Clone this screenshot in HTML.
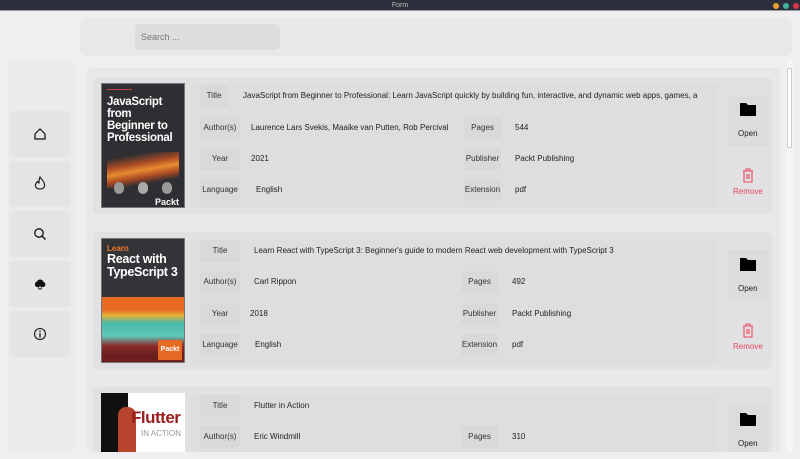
<!DOCTYPE html>
<html><head><meta charset="utf-8"><style>
*{margin:0;padding:0;box-sizing:border-box}
body{width:800px;height:459px;overflow:hidden;background:#efeef0;font-family:"Liberation Sans",sans-serif;font-size:8px;color:#222;position:relative}
.a{position:absolute}
.tb{left:0;top:0;width:800px;height:11px;background:#2c2e3b;color:#bbb;font-size:7px;text-align:center;line-height:11px;border-bottom:1px solid #999}
.dot{top:3px;width:6px;height:6px;border-radius:50%}
.sb{left:7px;top:60px;width:68px;height:392px;background:#ebeaec;border-radius:6px}
.nb{left:9px;width:62px;height:46px;background:#e4e3e6;border-radius:5px;display:flex;align-items:center;justify-content:center}
.card{left:93px;width:679px;height:137px;background:#e1e0e3;border-radius:6px}
.lbl{color:#333}
.row{background:#dddcdf;border-radius:3px}
.pill{background:#d9d8db;border-radius:3px;text-align:center;line-height:22px;height:22px}
.cv{font-family:"Liberation Sans",sans-serif;font-weight:bold}
</style></head><body>
<div class="a tb">Form</div>
<div class="a dot" style="left:773px;background:#e8a22d"></div>
<div class="a dot" style="left:783px;background:#3cb39a"></div>
<div class="a dot" style="left:793px;background:#e0344e"></div>

<div class="a" style="left:80px;top:18px;width:712px;height:38px;background:#e8e7ea;border-radius:6px"></div>
<div class="a" style="left:135px;top:24px;width:145px;height:26px;background:#dddcdf;border-radius:5px;color:#777;font-size:9px;line-height:26px;padding-left:6px">Search ...</div>

<div class="a sb"></div>
<div class="a nb" style="top:111px"><svg width="14" height="14" viewBox="0 0 14 14"><path d="M2 7 L7 2 L12 7 V12 H2 Z" fill="none" stroke="#111" stroke-width="1.2"/></svg></div>
<div class="a nb" style="top:161px"><svg width="14" height="16" viewBox="0 0 14 16"><path d="M7 1 C9 4 12 6 11.5 10 C11 14 3 14 2.5 10 C2.2 8 3.5 6.5 4.5 5.5 C5 7 6 7 6 7 C6 4.5 6 3 7 1Z" fill="none" stroke="#111" stroke-width="1.1"/></svg></div>
<div class="a nb" style="top:211px"><svg width="14" height="14" viewBox="0 0 14 14"><circle cx="6" cy="6" r="4.2" fill="none" stroke="#111" stroke-width="1.3"/><path d="M9 9 L12.5 12.5" stroke="#111" stroke-width="1.4"/></svg></div>
<div class="a nb" style="top:261px"><svg width="14" height="14" viewBox="0 0 14 14"><path d="M3.5 10 A3 3 0 0 1 4 4.5 A3.5 3.5 0 0 1 10.5 5 A2.6 2.6 0 0 1 10.5 10 Z" fill="#111"/><circle cx="7" cy="10.5" r="2" fill="#111"/><path d="M7 9 V12 M5.6 10.5 H8.4" stroke="#fff" stroke-width="0.8"/></svg></div>
<div class="a nb" style="top:311px"><svg width="14" height="14" viewBox="0 0 14 14"><circle cx="7" cy="7" r="5.5" fill="none" stroke="#111" stroke-width="1.1"/><path d="M7 6 V10.5" stroke="#111" stroke-width="1.3"/><circle cx="7" cy="4.2" r="0.8" fill="#111"/></svg></div>

<div class="a" style="left:86px;top:68px;width:694px;height:384px;background:#e8e7ea;border-radius:6px"></div>
<div class="a" style="left:786px;top:60px;width:7px;height:392px;background:#f5f5f6"></div>
<div class="a" style="left:787px;top:68px;width:5px;height:80px;background:#fff;border:1px solid #ccc"></div>

<!-- card 1 -->
<div class="a card" style="top:77px"></div>
<div class="a" style="left:101px;top:83px;width:84px;height:125px;background:#2f2f33;border:1px solid #777;color:#fff;padding:5px 5px">
<div style="height:1px;width:25px;background:#c44;margin-bottom:6px"></div>
<div class="cv" style="font-size:11.5px;line-height:12px;letter-spacing:-0.3px">JavaScript from Beginner to Professional</div>
<div style="height:36px;margin-top:8px;background:linear-gradient(170deg,transparent 15%,#a84a24 35%,#e88a30 50%,#a84a24 65%,transparent 80%)"></div>
<div style="display:flex;justify-content:space-around;margin-top:-6px"><span style="width:10px;height:12px;border-radius:5px;background:#999"></span><span style="width:10px;height:12px;border-radius:5px;background:#aaa"></span><span style="width:10px;height:12px;border-radius:5px;background:#999"></span></div>
<div class="cv" style="font-size:9px;text-align:right;margin-top:3px">Packt</div></div>
<div class="a row" style="left:191px;top:84px;width:527px;height:124px;background:#dedde0"></div>
<div class="a pill lbl" style="left:200px;top:85px;width:28px">Title</div>
<div class="a" style="left:243px;top:91px">JavaScript from Beginner to Professional: Learn JavaScript quickly by building fun, interactive, and dynamic web apps, games, a</div>
<div class="a pill lbl" style="left:200px;top:117px;width:40px">Author(s)</div>
<div class="a" style="left:251px;top:123px">Laurence Lars Svekis, Maaike van Putten, Rob Percival</div>
<div class="a pill lbl" style="left:200px;top:148px;width:40px">Year</div>
<div class="a" style="left:251px;top:154px">2021</div>
<div class="a pill lbl" style="left:200px;top:179px;width:40px">Language</div>
<div class="a" style="left:256px;top:185px">English</div>
<div class="a pill lbl" style="left:464px;top:117px;width:37px">Pages</div>
<div class="a" style="left:515px;top:123px">544</div>
<div class="a pill lbl" style="left:464px;top:148px;width:37px">Publisher</div>
<div class="a" style="left:515px;top:154px">Packt Publishing</div>
<div class="a pill lbl" style="left:464px;top:179px;width:37px">Extension</div>
<div class="a" style="left:515px;top:185px">pdf</div>
<div class="a" style="left:728px;top:96px;width:40px;height:50px;background:#dcdbde;border-radius:3px"></div>
<svg class="a" style="left:739px;top:101px" width="18" height="16" viewBox="0 0 18 16"><path d="M1 2 H7 L9 4 H17 V15 H1Z" fill="#000"/></svg>
<div class="a" style="left:738px;top:129px">Open</div>
<svg class="a" style="left:741px;top:168px" width="14" height="15" viewBox="0 0 14 15"><path d="M2 3 H12 M5 3 V1 H9 V3 M3 3 V14 H11 V3 M6 6 V11 M8 6 V11" fill="none" stroke="#e84a5f" stroke-width="1.1"/></svg>
<div class="a" style="left:733px;top:187px;color:#e84a5f">Remove</div>

<!-- card 2 -->
<div class="a card" style="top:232px"></div>
<div class="a" style="left:101px;top:238px;width:84px;height:125px;background:#333438;border:1px solid #777;color:#fff;padding:5px 5px">
<div class="cv" style="color:#f07a28;font-size:8px">Learn</div>
<div class="cv" style="font-size:12.5px;line-height:13px;letter-spacing:-0.3px">React with TypeScript 3</div></div>
<div class="a" style="left:102px;top:297px;width:82px;height:65px;background:linear-gradient(#e66a24 0%,#e66a24 20%,#e8b030 28%,#4ab8a8 40%,#5ec8b8 60%,#8a2a2a 75%,#6a1e1e 90%)"></div>
<div class="a" style="left:158px;top:340px;width:24px;height:20px;background:#e66a24;color:#fff;font-size:7px;font-weight:bold;text-align:center;line-height:20px">Packt</div>
<div class="a row" style="left:191px;top:239px;width:527px;height:124px;background:#dedde0"></div>
<div class="a pill lbl" style="left:200px;top:240px;width:40px">Title</div>
<div class="a" style="left:254px;top:246px">Learn React with TypeScript 3: Beginner's guide to modern React web development with TypeScript 3</div>
<div class="a pill lbl" style="left:200px;top:271px;width:40px">Author(s)</div>
<div class="a" style="left:254px;top:277px">Carl Rippon</div>
<div class="a pill lbl" style="left:200px;top:303px;width:40px">Year</div>
<div class="a" style="left:250px;top:309px">2018</div>
<div class="a pill lbl" style="left:200px;top:334px;width:40px">Language</div>
<div class="a" style="left:255px;top:340px">English</div>
<div class="a pill lbl" style="left:461px;top:271px;width:37px">Pages</div>
<div class="a" style="left:512px;top:277px">492</div>
<div class="a pill lbl" style="left:461px;top:303px;width:37px">Publisher</div>
<div class="a" style="left:512px;top:309px">Packt Publishing</div>
<div class="a pill lbl" style="left:461px;top:334px;width:37px">Extension</div>
<div class="a" style="left:512px;top:340px">pdf</div>
<div class="a" style="left:728px;top:250px;width:40px;height:50px;background:#dcdbde;border-radius:3px"></div>
<svg class="a" style="left:739px;top:256px" width="18" height="16" viewBox="0 0 18 16"><path d="M1 2 H7 L9 4 H17 V15 H1Z" fill="#000"/></svg>
<div class="a" style="left:738px;top:284px">Open</div>
<svg class="a" style="left:741px;top:323px" width="14" height="15" viewBox="0 0 14 15"><path d="M2 3 H12 M5 3 V1 H9 V3 M3 3 V14 H11 V3 M6 6 V11 M8 6 V11" fill="none" stroke="#e84a5f" stroke-width="1.1"/></svg>
<div class="a" style="left:733px;top:342px;color:#e84a5f">Remove</div>

<!-- card 3 -->
<div class="a card" style="top:387px;height:65px"></div>
<div class="a" style="left:101px;top:393px;width:84px;height:59px;background:#fff;overflow:hidden">
<div class="a" style="left:0;top:0;width:27px;height:59px;background:#111"></div>
<div class="a" style="left:17px;top:14px;width:18px;height:45px;background:#b8442e;border-radius:8px 8px 0 0"></div>
<div class="a cv" style="left:30px;top:15px;color:#9a1d1d;font-size:17px;letter-spacing:-0.5px;font-family:'Liberation Sans Narrow','Liberation Sans',sans-serif">Flutter</div>
<div class="a" style="left:40px;top:36px;color:#999;font-size:8px">IN ACTION</div></div>
<div class="a row" style="left:191px;top:394px;width:527px;height:58px;background:#dedde0"></div>
<div class="a pill lbl" style="left:200px;top:395px;width:40px">Title</div>
<div class="a" style="left:254px;top:401px">Flutter in Action</div>
<div class="a pill lbl" style="left:200px;top:426px;width:40px">Author(s)</div>
<div class="a" style="left:254px;top:432px">Eric Windmill</div>
<div class="a pill lbl" style="left:461px;top:426px;width:37px">Pages</div>
<div class="a" style="left:512px;top:432px">310</div>
<div class="a" style="left:728px;top:405px;width:40px;height:47px;background:#dcdbde;border-radius:3px"></div>
<svg class="a" style="left:739px;top:411px" width="18" height="16" viewBox="0 0 18 16"><path d="M1 2 H7 L9 4 H17 V15 H1Z" fill="#000"/></svg>
<div class="a" style="left:738px;top:439px">Open</div>
</body></html>
